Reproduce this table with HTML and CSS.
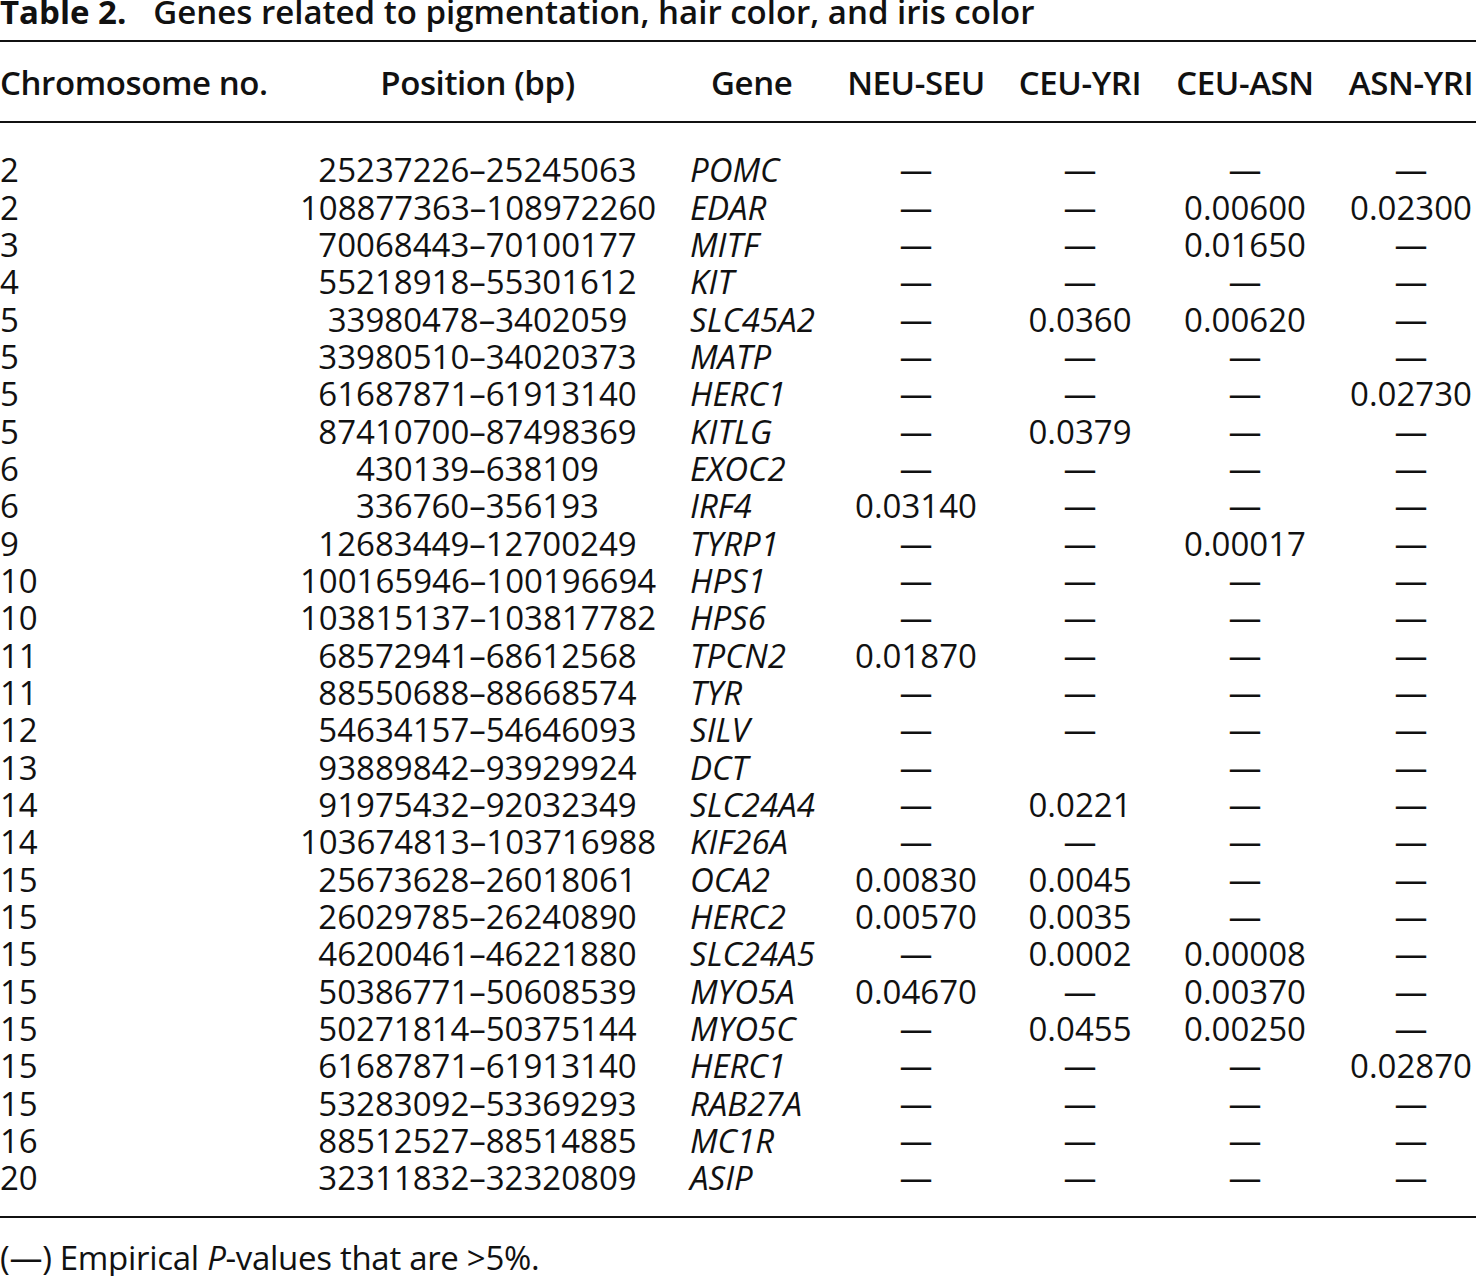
FILE: index.html
```html
<!DOCTYPE html>
<html lang="en">
<head>
<meta charset="utf-8">
<title>Table 2. Genes related to pigmentation, hair color, and iris color</title>
<link rel="stylesheet" href="styles.css">
</head>
<body>
<div class="caption"><span class="label">Table 2.</span><span class="title">Genes related to pigmentation, hair color, and iris color</span></div>
<table class="data">
<colgroup>
<col class="w1"><col class="w2"><col class="w3"><col class="w4"><col class="w5"><col class="w6"><col class="w7">
</colgroup>
<thead>
<tr><th class="left">Chromosome no.</th><th>Position (bp)</th><th class="gene-h">Gene</th><th>NEU-SEU</th><th>CEU-YRI</th><th class="c6">CEU-ASN</th><th>ASN-YRI</th></tr>
</thead>
<tbody>
<tr><td class="left">2</td><td>25237226–25245063</td><td class="gene">POMC</td><td>—</td><td>—</td><td class="c6">—</td><td>—</td></tr>
<tr><td class="left">2</td><td>108877363–108972260</td><td class="gene">EDAR</td><td>—</td><td>—</td><td class="c6">0.00600</td><td>0.02300</td></tr>
<tr><td class="left">3</td><td>70068443–70100177</td><td class="gene">MITF</td><td>—</td><td>—</td><td class="c6">0.01650</td><td>—</td></tr>
<tr><td class="left">4</td><td>55218918–55301612</td><td class="gene">KIT</td><td>—</td><td>—</td><td class="c6">—</td><td>—</td></tr>
<tr><td class="left">5</td><td>33980478–3402059</td><td class="gene">SLC45A2</td><td>—</td><td>0.0360</td><td class="c6">0.00620</td><td>—</td></tr>
<tr><td class="left">5</td><td>33980510–34020373</td><td class="gene">MATP</td><td>—</td><td>—</td><td class="c6">—</td><td>—</td></tr>
<tr><td class="left">5</td><td>61687871–61913140</td><td class="gene">HERC1</td><td>—</td><td>—</td><td class="c6">—</td><td>0.02730</td></tr>
<tr><td class="left">5</td><td>87410700–87498369</td><td class="gene">KITLG</td><td>—</td><td>0.0379</td><td class="c6">—</td><td>—</td></tr>
<tr><td class="left">6</td><td>430139–638109</td><td class="gene">EXOC2</td><td>—</td><td>—</td><td class="c6">—</td><td>—</td></tr>
<tr><td class="left">6</td><td>336760–356193</td><td class="gene">IRF4</td><td>0.03140</td><td>—</td><td class="c6">—</td><td>—</td></tr>
<tr><td class="left">9</td><td>12683449–12700249</td><td class="gene">TYRP1</td><td>—</td><td>—</td><td class="c6">0.00017</td><td>—</td></tr>
<tr><td class="left">10</td><td>100165946–100196694</td><td class="gene">HPS1</td><td>—</td><td>—</td><td class="c6">—</td><td>—</td></tr>
<tr><td class="left">10</td><td>103815137–103817782</td><td class="gene">HPS6</td><td>—</td><td>—</td><td class="c6">—</td><td>—</td></tr>
<tr><td class="left">11</td><td>68572941–68612568</td><td class="gene">TPCN2</td><td>0.01870</td><td>—</td><td class="c6">—</td><td>—</td></tr>
<tr><td class="left">11</td><td>88550688–88668574</td><td class="gene">TYR</td><td>—</td><td>—</td><td class="c6">—</td><td>—</td></tr>
<tr><td class="left">12</td><td>54634157–54646093</td><td class="gene">SILV</td><td>—</td><td>—</td><td class="c6">—</td><td>—</td></tr>
<tr><td class="left">13</td><td>93889842–93929924</td><td class="gene">DCT</td><td>—</td><td></td><td class="c6">—</td><td>—</td></tr>
<tr><td class="left">14</td><td>91975432–92032349</td><td class="gene">SLC24A4</td><td>—</td><td>0.0221</td><td class="c6">—</td><td>—</td></tr>
<tr><td class="left">14</td><td>103674813–103716988</td><td class="gene">KIF26A</td><td>—</td><td>—</td><td class="c6">—</td><td>—</td></tr>
<tr><td class="left">15</td><td>25673628–26018061</td><td class="gene">OCA2</td><td>0.00830</td><td>0.0045</td><td class="c6">—</td><td>—</td></tr>
<tr><td class="left">15</td><td>26029785–26240890</td><td class="gene">HERC2</td><td>0.00570</td><td>0.0035</td><td class="c6">—</td><td>—</td></tr>
<tr><td class="left">15</td><td>46200461–46221880</td><td class="gene">SLC24A5</td><td>—</td><td>0.0002</td><td class="c6">0.00008</td><td>—</td></tr>
<tr><td class="left">15</td><td>50386771–50608539</td><td class="gene">MYO5A</td><td>0.04670</td><td>—</td><td class="c6">0.00370</td><td>—</td></tr>
<tr><td class="left">15</td><td>50271814–50375144</td><td class="gene">MYO5C</td><td>—</td><td>0.0455</td><td class="c6">0.00250</td><td>—</td></tr>
<tr><td class="left">15</td><td>61687871–61913140</td><td class="gene">HERC1</td><td>—</td><td>—</td><td class="c6">—</td><td>0.02870</td></tr>
<tr><td class="left">15</td><td>53283092–53369293</td><td class="gene">RAB27A</td><td>—</td><td>—</td><td class="c6">—</td><td>—</td></tr>
<tr><td class="left">16</td><td>88512527–88514885</td><td class="gene">MC1R</td><td>—</td><td>—</td><td class="c6">—</td><td>—</td></tr>
<tr><td class="left">20</td><td>32311832–32320809</td><td class="gene">ASIP</td><td>—</td><td>—</td><td class="c6">—</td><td>—</td></tr>
</tbody>
</table>
<p class="note">(—) Empirical <i>P</i>-values that are &gt;5%.</p>
</body>
</html>
```

FILE: styles.css
```css
html, body {
  margin: 0;
  padding: 0;
  background: #ffffff;
}
body {
  font-family: "Open Sans", "Noto Sans", sans-serif;
  font-size: 33px;
  color: #111111;
  width: 1476px;
  overflow: hidden;
}
.caption {
  line-height: 37px;
  margin-top: -7px;
  margin-bottom: 10px;
  white-space: nowrap;
}
.caption .label {
  font-weight: 700;
  margin-right: 27px;
}
.caption .title {
  font-weight: 600;
}
.data {
  width: 1476px;
  table-layout: fixed;
  border-collapse: collapse;
  border-top: 2px solid #111;
  border-bottom: 2px solid #111;
}
.w1 { width: 300px; }
.w2 { width: 355px; }
.w3 { width: 178px; }
.w4 { width: 166px; }
.w5 { width: 162px; }
.w6 { width: 185px; }
.w7 { width: 130px; }
.data th, .data td {
  padding: 0;
  text-align: center;
  white-space: nowrap;
  line-height: 37.33px;
}
.data th {
  font-weight: 600;
  letter-spacing: -0.4px;
  border-bottom: 2px solid #111;
}
.data thead th {
  padding-top: 22px;
  padding-bottom: 20px;
}
.data .left { text-align: left; }
.data .gene-h { text-align: left; padding-left: 56px; }
.data .gene { text-align: left; padding-left: 35px; font-style: italic; }
.data .c6 { padding-right: 17px; }
.data tbody tr:first-child td { padding-top: 28px; }
.data tbody tr:last-child td { padding-bottom: 19px; }
.note {
  margin: 21px 0 0 0;
  line-height: 37px;
  letter-spacing: -0.3px;
}
```
